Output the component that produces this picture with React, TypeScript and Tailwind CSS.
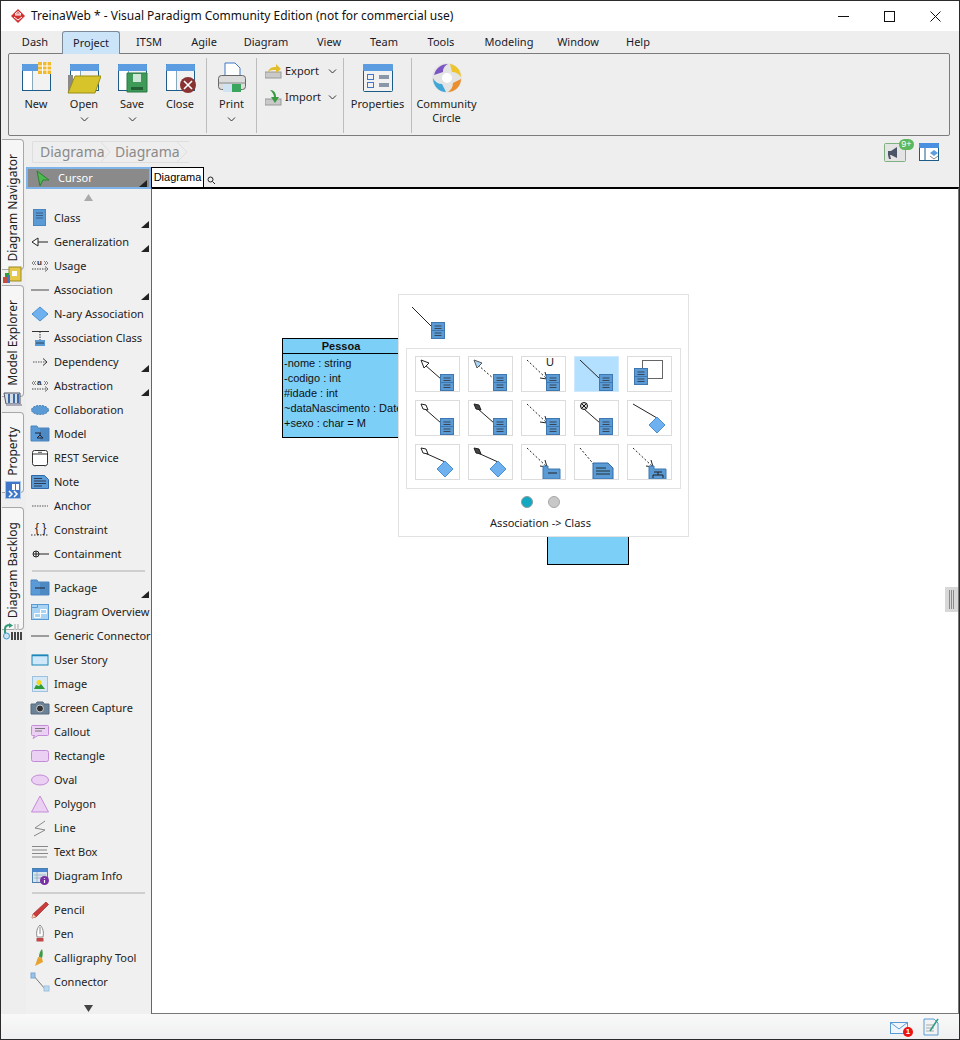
import { type ReactNode } from "react";

const uiFont = "font-['Noto_Sans',sans-serif]";
const arial = "font-['Liberation_Sans',Arial,sans-serif]";

type PaletteItem = { label: string; icon: ReactNode; more?: boolean };

function Svg({ size = 20, box = 20, children }: { size?: number; box?: number; children: ReactNode }) {
  return (
    <svg width={size} height={size} viewBox={`0 0 ${box} ${box}`} fill="none" className="shrink-0">
      {children}
    </svg>
  );
}

function Chevron() {
  return (
    <svg width="9" height="5" viewBox="0 0 9 5" fill="none">
      <path d="M1 0.5 4.5 4 8 0.5" stroke="#333" strokeWidth="1" />
    </svg>
  );
}

function ClassGlyph({ x, y }: { x: number; y: number }) {
  return (
    <g transform={`translate(${x} ${y})`}>
      <rect x="0.5" y="0.5" width="13" height="16" fill="#5b9bd5" stroke="#3f78b0" />
      <path d="M0.5 8.5h13" stroke="#3f78b0" />
      <path d="M3.5 4h7M3.5 6.5h7M3.5 11h7M3.5 13.5h7" stroke="#39475a" />
    </g>
  );
}

function BlueDiamond({ x, y }: { x: number; y: number }) {
  return <path d={`M${x} ${y - 8}l8 8-8 8-8-8z`} fill="#6fb1ee" stroke="#4a8fd0" />;
}

function End({ kind }: { kind: string }) {
  if (kind === "triangle")
    return <path d="M5 3 13 6 8 11z" fill="#fff" stroke="#222" />;
  if (kind === "triangleBlue")
    return <path d="M5 3 13 6 8 11z" fill="#a9d6f5" stroke="#555" />;
  if (kind === "diamond")
    return <path d="M5 3 10 4 12 9 7 8z" fill="#fff" stroke="#222" />;
  if (kind === "diamondDark")
    return <path d="M5 3 10 4 12 9 7 8z" fill="#444" stroke="#222" />;
  if (kind === "cross")
    return (
      <g stroke="#111">
        <circle cx="9" cy="5" r="3.5" fill="#ddd" />
        <path d="M6.5 2.5 11.5 7.5M11.5 2.5 6.5 7.5" />
      </g>
    );
  return null;
}

type CellProps = {
  end?: string;
  dotted?: boolean;
  arrow?: boolean;
  target?: "class" | "diamond" | "package" | "note" | "model" | "none";
  text?: string;
  active?: boolean;
  self?: boolean;
};

function Cell({ end, dotted, arrow, target = "class", text, active, self }: CellProps) {
  const tx = target === "diamond" ? 29 : target === "note" ? 21 : 25;
  const ty = target === "diamond" ? 17 : 22;
  return (
    <div className={`h-[36px] w-[45px] border ${active ? "border-[#cfe8fb] bg-[#b3e0ff]" : "border-[#dcdcdc] bg-white"}`}>
      <svg width="43" height="34" viewBox="0 0 43 34" fill="none">
        {self ? (
          <>
            <rect x="14.5" y="3.5" width="20" height="18" stroke="#666" fill="#fff" />
            <ClassGlyph x={6} y={11} />
          </>
        ) : (
          <>
            <path
              d={`M${end ? 9 : 5} ${end ? 8 : 3}L${tx} ${ty}`}
              stroke="#222"
              strokeDasharray={dotted ? "2 2" : undefined}
            />
            <End kind={end ?? ""} />
            {arrow && <path d={`M${tx - 7} ${ty - 1}l7 1-2-7`} stroke="#222" />}
            {text && (
              <text x="24" y="9" fontSize="11" fontFamily="Liberation Sans" fill="#222">
                {text}
              </text>
            )}
            {target === "class" && <ClassGlyph x={24} y={17} />}
            {target === "diamond" && <BlueDiamond x={29} y={24} />}
            {target === "package" && (
              <g>
                <path d="M21 21h5v3h12v10H21z" fill="#5b9bd5" stroke="#3f78b0" />
                <path d="M26 28h9" stroke="#222" />
              </g>
            )}
            {target === "note" && (
              <g>
                <path d="M18 18h15l5 5v11H18z" fill="#5b9bd5" stroke="#2f68a8" />
                <path d="M21 23h10M21 26h14M21 29h14" stroke="#233" />
              </g>
            )}
            {target === "model" && (
              <g>
                <path d="M21 21h5v3h12v10H21z" fill="#5b9bd5" stroke="#3f78b0" />
                <path d="M26 27h8M30 27v3M25 33v-3h10v3" stroke="#222" />
              </g>
            )}
          </>
        )}
      </svg>
    </div>
  );
}

const classIcon = (
  <Svg>
    <rect x="3.5" y="1.5" width="12" height="16" fill="#5b9bd5" stroke="#4a86c0" />
    <path d="M6 5h7M6 7.5h7M6 10h7" stroke="#3b5f85" />
  </Svg>
);

const folderIcon = (inner: ReactNode) => (
  <Svg>
    <path d="M1 2h6l1 2h11v13H1z" fill="#5a9ad6" stroke="#4a86c0" />
    <path d="M10 4.5h9v12h-9z" fill="#3f78b0" opacity="0.5" />
    {inner}
  </Svg>
);

const purpleFill = "#ecd0f4";
const purpleStroke = "#c48bd8";

const palette1: PaletteItem[] = [
  { label: "Class", icon: classIcon, more: true },
  {
    label: "Generalization",
    more: true,
    icon: (
      <Svg>
        <path d="M8 6 2 10l6 4zM8 10h10" stroke="#222" fill="#fff" />
      </Svg>
    ),
  },
  {
    label: "Usage",
    icon: (
      <Svg>
        <text x="7" y="9" fontSize="8" fontWeight="bold" fontFamily="Liberation Sans" fill="#333">u</text>
        <path d="M4 5 2 7l2 2M6 5 4 7l2 2M14 5l2 2-2 2M16 5l2 2-2 2" stroke="#555" strokeWidth="0.7" />
        <path d="M2 13h15" stroke="#444" strokeDasharray="1.5 1" />
        <path d="M15 10.5 18 13l-3 2.5" stroke="#444" strokeWidth="0.8" />
      </Svg>
    ),
  },
  {
    label: "Association",
    more: true,
    icon: (
      <Svg>
        <path d="M1 10h18" stroke="#777" strokeWidth="1.4" />
      </Svg>
    ),
  },
  {
    label: "N-ary Association",
    icon: (
      <Svg>
        <path d="M10 3l8 7-8 7-8-7z" fill="#6fb1ee" stroke="#4a8fd0" />
      </Svg>
    ),
  },
  {
    label: "Association Class",
    icon: (
      <Svg>
        <path d="M2 3.5h17" stroke="#333" />
        <path d="M10 3.5v9" stroke="#333" strokeDasharray="1.5 1" />
        <rect x="5" y="12" width="10" height="6" fill="#5b9bd5" />
        <path d="M6 15h8" stroke="#345" />
      </Svg>
    ),
  },
  {
    label: "Dependency",
    more: true,
    icon: (
      <Svg>
        <path d="M3 10h13" stroke="#555" strokeDasharray="1.5 1" />
        <path d="M13 6.5 17 10l-4 3.5" stroke="#333" />
      </Svg>
    ),
  },
  {
    label: "Abstraction",
    more: true,
    icon: (
      <Svg>
        <text x="7" y="9" fontSize="8" fontWeight="bold" fontFamily="Liberation Sans" fill="#333">a</text>
        <path d="M4 5 2 7l2 2M6 5 4 7l2 2M14 5l2 2-2 2M16 5l2 2-2 2" stroke="#555" strokeWidth="0.7" />
        <path d="M2 13h15" stroke="#444" strokeDasharray="1.5 1" />
        <path d="M15 10.5 18 13l-3 2.5" stroke="#444" strokeWidth="0.8" />
      </Svg>
    ),
  },
  {
    label: "Collaboration",
    icon: (
      <Svg>
        <ellipse cx="10" cy="10" rx="8.5" ry="4.5" fill="#5b9bd5" stroke="#3f78b0" strokeDasharray="2 1" />
      </Svg>
    ),
  },
  {
    label: "Model",
    icon: folderIcon(<path d="M5 9h6M10 9v2M7 14l3-3 3 3z" stroke="#223" fill="none" />),
  },
  {
    label: "REST Service",
    icon: (
      <Svg>
        <rect x="2.5" y="2.5" width="15" height="15" rx="2" fill="#fff" stroke="#333" />
        <path d="M2.5 6h15" stroke="#333" />
        <path d="M8 4.3h4M5 17.5v1M15 17.5v1" stroke="#555" />
      </Svg>
    ),
  },
  {
    label: "Note",
    icon: (
      <Svg>
        <path d="M1.5 3.5h13l4 4v9h-17z" fill="#5b9bd5" stroke="#2f68a8" />
        <path d="M4 6.5h8M4 9h12M4 11.5h12M4 14h8" stroke="#223" strokeWidth="0.8" />
      </Svg>
    ),
  },
  {
    label: "Anchor",
    icon: (
      <Svg>
        <path d="M2 10h16" stroke="#555" strokeDasharray="1.5 1" />
      </Svg>
    ),
  },
  {
    label: "Constraint",
    icon: (
      <Svg>
        <text x="5" y="12" fontSize="12" fontFamily="Liberation Sans" fill="#222">{"{ }"}</text>
        <path d="M1 15h18" stroke="#333" strokeDasharray="1.5 1.5" />
      </Svg>
    ),
  },
  {
    label: "Containment",
    icon: (
      <Svg>
        <circle cx="6" cy="10" r="3" stroke="#222" />
        <path d="M3 10h6M6 7v6M9 10h10" stroke="#222" />
      </Svg>
    ),
  },
];

const palette2: PaletteItem[] = [
  { label: "Package", more: true, icon: folderIcon(<path d="M5 10h10" stroke="#223" />) },
  {
    label: "Diagram Overview",
    icon: (
      <Svg>
        <rect x="1.5" y="2.5" width="17" height="15" fill="#a9d3f2" stroke="#5b9bd5" />
        <path d="M1.5 5.5h6v-3" stroke="#5b9bd5" />
        <path d="M10.5 7.5h6v4h-6zM4.5 11.5h6v4h-6z" stroke="#fff" />
      </Svg>
    ),
  },
  {
    label: "Generic Connector",
    icon: (
      <Svg>
        <path d="M1 10h18" stroke="#777" strokeWidth="1.4" />
      </Svg>
    ),
  },
  {
    label: "User Story",
    icon: (
      <Svg>
        <rect x="2" y="5" width="16" height="10" fill="#cfe9fa" stroke="#1c86b8" />
        <path d="M2 5.5h16" stroke="#1c86b8" strokeWidth="1.5" />
      </Svg>
    ),
  },
  {
    label: "Image",
    icon: (
      <Svg>
        <rect x="2.5" y="2.5" width="15" height="15" fill="#d6e8f6" stroke="#9cc2e0" />
        <circle cx="9" cy="8.5" r="2.5" fill="#f3d81d" />
        <path d="M4 15l2-4 3 1 2-2 4 5z" fill="#2f9b36" />
      </Svg>
    ),
  },
  {
    label: "Screen Capture",
    icon: (
      <Svg>
        <path d="M1 6h5l1-2h6l1 2h5v10H1z" fill="#6c8297" stroke="#566a7e" />
        <circle cx="10" cy="10.5" r="3.5" fill="#333" stroke="#ccc" />
      </Svg>
    ),
  },
  {
    label: "Callout",
    icon: (
      <Svg>
        <path d="M2.5 3.5h15a1 1 0 0 1 1 1v8a1 1 0 0 1-1 1H8l-5 3 1.5-3h-2a1 1 0 0 1-1-1v-8a1 1 0 0 1 1-1z" fill={purpleFill} stroke={purpleStroke} />
        <path d="M5 6.5h10M5 9h7" stroke="#777" />
      </Svg>
    ),
  },
  {
    label: "Rectangle",
    icon: (
      <Svg>
        <rect x="1.5" y="4.5" width="17" height="11" rx="2" fill={purpleFill} stroke={purpleStroke} />
      </Svg>
    ),
  },
  {
    label: "Oval",
    icon: (
      <Svg>
        <ellipse cx="10" cy="10" rx="8.5" ry="5" fill={purpleFill} stroke={purpleStroke} />
      </Svg>
    ),
  },
  {
    label: "Polygon",
    icon: (
      <Svg>
        <path d="M10 2 18.5 18h-17z" fill={purpleFill} stroke={purpleStroke} />
      </Svg>
    ),
  },
  {
    label: "Line",
    icon: (
      <Svg>
        <path d="M15 3 5 10l10 2-11 6" stroke="#888" />
      </Svg>
    ),
  },
  {
    label: "Text Box",
    icon: (
      <Svg>
        <path d="M2 4.5h16M2 8h15M2 11.5h16M2 15h15" stroke="#888" />
      </Svg>
    ),
  },
  {
    label: "Diagram Info",
    icon: (
      <Svg>
        <rect x="2.5" y="2.5" width="15" height="14" fill="#d8e4ee" stroke="#4a7fae" />
        <path d="M2.5 4.5h15" stroke="#4a86d0" strokeWidth="3" />
        <path d="M7 6v10M4 9h12M4 12h12" stroke="#9fb4c6" />
        <circle cx="14.5" cy="14.5" r="4.5" fill="#7b2fa5" />
        <path d="M14.5 12v.8M14.5 14v3" stroke="#fff" strokeWidth="1.2" />
      </Svg>
    ),
  },
];

const palette3: PaletteItem[] = [
  {
    label: "Pencil",
    icon: (
      <Svg>
        <path d="M16 2l2.5 2.5L6 17l-4 1 1-4z" fill="#cc3b3b" stroke="#9c2b2b" strokeWidth="0.7" />
        <path d="M3 14l3 3-4 1z" fill="#ecd4b0" />
      </Svg>
    ),
  },
  {
    label: "Pen",
    icon: (
      <Svg>
        <path d="M10 1c-3 3-4 7-3 12h6c1-5 0-9-3-12zM10 3v7" stroke="#888" fill="#fff" />
        <rect x="6.5" y="14" width="7" height="3.5" fill="#c24848" />
      </Svg>
    ),
  },
  {
    label: "Calligraphy Tool",
    icon: (
      <Svg>
        <path d="M12 1c1 3 1 6 0 9l-3-1c0-3 1-6 3-8z" fill="#3f9a46" />
        <path d="M8 9l4 1 1 4-8 4c1-3 2-6 3-9z" fill="#e7a331" />
      </Svg>
    ),
  },
  {
    label: "Connector",
    icon: (
      <Svg>
        <path d="M3 3l12 14" stroke="#777" />
        <rect x="1" y="1" width="4" height="5" fill="#9cc2e8" stroke="#7aa5d0" />
        <rect x="14" y="14" width="5" height="5" fill="#bcd7ee" stroke="#9cc2e0" />
      </Svg>
    ),
  },
];

function PaletteRow({ item }: { item: PaletteItem }) {
  return (
    <div className="relative flex h-[24px] items-center gap-[4px] pl-[4px]">
      {item.icon}
      <span className="text-[11px] whitespace-nowrap text-[#222]">{item.label}</span>
      {item.more && <MoreMark className="bottom-[2px]" />}
    </div>
  );
}

function MoreMark({ className }: { className: string }) {
  return <span className={`absolute right-[2px] h-[7px] w-[8px] bg-[#222] [clip-path:polygon(100%_0,100%_100%,0_100%)] ${className}`} />;
}

function Separator() {
  return (
    <div className="flex h-[10px] items-center pr-[6px] pl-[6px]">
      <div className="h-[2px] w-full bg-[#cfcfcf]" />
    </div>
  );
}

function RibbonButton({ width, icon, label, menu }: { width: string; icon: ReactNode; label: ReactNode; menu?: boolean }) {
  return (
    <div className={`flex shrink-0 flex-col items-center pt-[7px] ${width}`}>
      <div className="flex h-[34px] items-center">{icon}</div>
      <span className="mt-[2px] text-center text-[11px] leading-[14px] text-[#222]">{label}</span>
      {menu && (
        <span className="mt-[6px] flex">
          <Chevron />
        </span>
      )}
    </div>
  );
}

function RibbonDivider() {
  return <div className="mt-[4px] h-[75px] w-[1px] shrink-0 bg-[#bdbdbd]" />;
}

function WindowIcon({ children }: { children: ReactNode }) {
  return (
    <svg width="34" height="32" viewBox="0 0 34 32" fill="none">
      <rect x="3.5" y="2.5" width="28" height="26" fill="#f2f2f2" stroke="#1d5c86" />
      <rect x="3" y="2" width="29" height="7" rx="1" fill="#5b9de0" />
      <path d="M13 9v19" stroke="#1d5c86" />
      <rect x="4" y="9" width="9" height="19" fill="#fff" />
      {children}
    </svg>
  );
}

function SideTab({ label, height, margin, icon }: { label: string; height: string; margin: string; icon: ReactNode }) {
  return (
    <div className={`flex w-[22px] flex-col items-center rounded-r-[4px] border border-l-0 border-[#a8a8a8] bg-[#f6f6f6] pt-[14px] ${height} ${margin}`}>
      <span className="rotate-180 text-[12px] leading-[16px] whitespace-nowrap text-[#222] [writing-mode:vertical-rl]">{label}</span>
      <div className="mt-[5px]">{icon}</div>
    </div>
  );
}

const tabs = [
  { label: "Dash", width: "w-[54px]" },
  { label: "Project", width: "w-[58px]", active: true },
  { label: "ITSM", width: "w-[58px]" },
  { label: "Agile", width: "w-[52px]" },
  { label: "Diagram", width: "w-[72px]" },
  { label: "View", width: "w-[54px]" },
  { label: "Team", width: "w-[56px]" },
  { label: "Tools", width: "w-[58px]" },
  { label: "Modeling", width: "w-[78px]" },
  { label: "Window", width: "w-[60px]" },
  { label: "Help", width: "w-[60px]" },
];

const attributes = ["-nome : string", "-codigo : int", "#idade : int", "~dataNascimento : Date", "+sexo : char = M"];

export default function App() {
  return (
    <div className={`${uiFont} flex h-[1040px] w-[960px] flex-col overflow-hidden border border-[#2b2b2b] bg-[#eeeeee]`}>
      {/* title bar */}
      <div className="flex h-[30px] shrink-0 items-center bg-white pr-[18px] pl-[9px]">
        <svg width="16" height="16" viewBox="0 0 16 16" className="shrink-0">
          <path d="M8 1l7 7-7 7-7-7z" fill="#d2312f" />
          <path d="M5 7h6M4 9l4 3 4-3M8 3.5 11 6H5z" stroke="#fff" strokeWidth="1" fill="none" />
        </svg>
        <span className="ml-[5px] text-[12px] text-[#111]">TreinaWeb * - Visual Paradigm Community Edition (not for commercial use)</span>
        <div className="ml-auto flex items-center gap-[35px]">
          <svg width="11" height="11" viewBox="0 0 11 11"><path d="M0 5.5h11" stroke="#111" /></svg>
          <svg width="11" height="11" viewBox="0 0 11 11" fill="none"><rect x="0.5" y="0.5" width="10" height="10" stroke="#111" /></svg>
          <svg width="11" height="11" viewBox="0 0 11 11"><path d="M0.5 0.5l10 10M10.5 0.5l-10 10" stroke="#111" /></svg>
        </div>
      </div>

      {/* ribbon tabs */}
      <div className="flex h-[22px] shrink-0 pl-[7px]">
        {tabs.map((tab) => (
          <div
            key={tab.label}
            className={`flex items-center justify-center text-[11px] text-[#1a1a2a] ${tab.width} ${tab.active ? "relative z-10 -mb-[1px] rounded-t-[3px] border border-b-0 border-[#7a8a99] bg-[#cce4f7]" : ""}`}
          >
            {tab.label}
          </div>
        ))}
      </div>

      {/* ribbon */}
      <div className="mr-[9px] ml-[7px] flex h-[83px] shrink-0 rounded-[2px] border border-[#7c7c7c] pl-[3px]">
        <RibbonButton
          width="w-[48px]"
          label="New"
          icon={
            <WindowIcon>
              <rect x="19" y="0" width="13" height="12" fill="#f1b92c" />
              <path d="M23.500 0v12M28 0v12M19 4h13M19 8h13" stroke="#fff" />
            </WindowIcon>
          }
        />
        <RibbonButton
          width="w-[48px]"
          menu
          label="Open"
          icon={
            <WindowIcon>
              <path d="M1 13h5v18H1z" fill="#8a8a8a" />
              <path d="M8 14h26l-6 17H1z" fill="#d6c42a" stroke="#9b8d16" />
            </WindowIcon>
          }
        />
        <RibbonButton
          width="w-[48px]"
          menu
          label="Save"
          icon={
            <WindowIcon>
              <path d="M12 11h20v19H12z" fill="#3f9a5a" stroke="#2b7a42" />
              <rect x="18" y="12" width="8" height="8" fill="#cfe7d6" />
              <rect x="16" y="25" width="12" height="3" fill="#235f34" />
            </WindowIcon>
          }
        />
        <RibbonButton
          width="w-[48px]"
          label="Close"
          icon={
            <WindowIcon>
              <circle cx="25" cy="23" r="8" fill="#8a3232" />
              <path d="M21 19l8 8M29 19l-8 8" stroke="#fff" strokeWidth="1.6" />
            </WindowIcon>
          }
        />
        <div className="w-[2px] shrink-0" />
        <RibbonDivider />
        <RibbonButton
          width="w-[49px]"
          menu
          label="Print"
          icon={
            <svg width="30" height="32" viewBox="0 0 30 32" fill="none">
              <path d="M8 1h10l5 5v9H8z" fill="#fff" stroke="#3f78c8" />
              <rect x="1.500" y="13.500" width="27" height="14" rx="3" fill="#dcdcdc" stroke="#666" />
              <rect x="6" y="22" width="18" height="8" fill="#3ba55d" />
              <rect x="6" y="22" width="9" height="8" fill="#cfe3f3" />
              <path d="M1.500 21h27" stroke="#888" />
            </svg>
          }
        />
        <RibbonDivider />
        <div className="flex w-[86px] shrink-0 flex-col pt-[4px] pl-[8px]">
          <div className="flex h-[26px] items-center gap-[3px] text-[11px] text-[#222]">
            <svg width="17" height="17" viewBox="0 0 17 17" className="shrink-0">
              <rect x="0" y="9" width="16" height="6" fill="#c9c9c9" stroke="#999" />
              <path d="M3 9c1-4 4-5 8-5V1l5 5-5 4V7c-3 0-6 0-8 2z" fill="#e3bd2b" />
            </svg>
            <span className="w-[40px]">Export</span>
            <Chevron />
          </div>
          <div className="flex h-[26px] items-center gap-[3px] text-[11px] text-[#222]">
            <svg width="17" height="17" viewBox="0 0 17 17" className="shrink-0">
              <rect x="0" y="10" width="16" height="6" fill="#c9c9c9" stroke="#999" />
              <path d="M5 1c4 0 6 3 6 7h3l-4 6-4-6h3c0-3-2-5-4-7z" fill="#3b9a3f" />
            </svg>
            <span className="w-[40px]">Import</span>
            <Chevron />
          </div>
        </div>
        <RibbonDivider />
        <RibbonButton
          width="w-[67px]"
          label="Properties"
          icon={
            <svg width="32" height="30" viewBox="0 0 32 30" fill="none">
              <rect x="1.500" y="1.500" width="29" height="27" rx="1" fill="#f1f1f1" stroke="#1d5c86" />
              <rect x="1" y="1" width="30" height="7" rx="1" fill="#5b9de0" />
              <rect x="5.500" y="11.500" width="6" height="5" stroke="#3f78c8" />
              <rect x="5.500" y="19.500" width="6" height="5" stroke="#3f78c8" />
              <rect x="17" y="12" width="10" height="4" fill="#8a97a8" />
              <rect x="17" y="20" width="10" height="4" fill="#8a97a8" />
            </svg>
          }
        />
        <RibbonDivider />
        <RibbonButton
          width="w-[69px]"
          label={
            <>
              Community
              <br />
              Circle
            </>
          }
          icon={
            <svg width="32" height="32" viewBox="0 0 32 32" fill="none">
              <circle cx="16" cy="16" r="15" fill="#e4e4e4" />
              <circle cx="16" cy="16" r="5" fill="#fff" />
              <path d="M3 13C5 6 10 2 17 2c-4 2-5 5-5 8z" fill="#7b55c4" />
              <path d="M19 2c6 1 11 6 11 13-2-3-5-5-9-5z" fill="#eec42b" />
              <path d="M30 17c0 7-6 13-13 13 3-2 5-5 5-9z" fill="#ea8f2b" />
              <path d="M15 30C8 30 2 24 2 16c2 4 5 6 9 6z" fill="#3fa6d8" />
            </svg>
          }
        />
      </div>

      {/* body */}
      <div className="flex min-h-0 flex-1">
        <div className="flex w-[25px] shrink-0 flex-col pl-[1px]">
          <SideTab
            label="Diagram Navigator"
            height="h-[131px]"
            margin="mt-[3px]"
            icon={
              <svg width="19" height="18" viewBox="0 0 19 18">
                <rect x="6" y="1" width="12" height="14" fill="#e6c84a" stroke="#9b8a20" />
                <rect x="9" y="5" width="5" height="5" fill="#fff" />
                <rect x="2" y="7" width="4" height="9" fill="#2f9b36" />
                <rect x="0" y="11" width="5" height="6" fill="#c84b3b" />
                <rect x="4" y="9" width="3" height="8" fill="#3f78c8" />
              </svg>
            }
          />
          <SideTab
            label="Model Explorer"
            height="h-[112px]"
            margin="mt-[15px]"
            icon={
              <svg width="19" height="16" viewBox="0 0 19 16" fill="none">
                <path d="M1 2h16v11H3z" fill="#d3dde6" stroke="#556" />
                <path d="M6 3v9M11 3v9M15 3v9" stroke="#3f68a8" strokeWidth="2" />
                <path d="M3 13h16v2H3z" fill="#aab" />
              </svg>
            }
          />
          <SideTab
            label="Property"
            height="h-[81px]"
            margin="mt-[15px]"
            icon={
              <svg width="16" height="18" viewBox="0 0 16 18" fill="none">
                <rect x="0.500" y="0.500" width="15" height="17" fill="#3f78c8" stroke="#a9c4e6" />
                <rect x="7" y="3" width="3" height="6" fill="#fff" />
                <rect x="11" y="3" width="3" height="6" fill="#fff" />
                <path d="M4 10l3 3-3 3M9 10l3 3-3 3" stroke="#fff" strokeWidth="1.5" />
              </svg>
            }
          />
          <SideTab
            label="Diagram Backlog"
            height="h-[123px]"
            margin="mt-[14px]"
            icon={
              <svg width="19" height="17" viewBox="0 0 19 17" fill="none">
                <path d="M2 10V6c0-3 2-4 5-4" stroke="#2f9b76" strokeWidth="2" />
                <path d="M6 0l4 2.500L6 5z" fill="#2f9b76" />
                <circle cx="3.500" cy="13" r="3" fill="#cfe3f3" stroke="#3f9ac8" />
                <path d="M9 9v8M12 9v8M15 9v8M18 9v8" stroke="#444" strokeWidth="2" />
                <path d="M12 1v6M15 1v6" stroke="#ccc" strokeWidth="2" />
              </svg>
            }
          />
        </div>

        <div className="flex min-w-0 flex-1 flex-col">
          {/* breadcrumb */}
          <div className="flex h-[31px] shrink-0 items-center pr-[20px] pl-[6px]">
            <div className="flex h-[22px] items-center rounded-l-[2px] border-y border-l border-[#dedede] pl-[7px] text-[14px] text-[#8a8a8a]">
              <span className="w-[59px]">Diagrama</span>
              <svg width="28" height="22" viewBox="0 0 28 22" fill="none" className="-my-[1px]">
                <path d="M1 0l10 11L1 22" stroke="#dedede" />
              </svg>
              <span className="-ml-[12px] w-[60px]">Diagrama</span>
              <svg width="14" height="22" viewBox="0 0 14 22" fill="none" className="-my-[1px]">
                <path d="M1 0l11 11L1 22" stroke="#dedede" />
              </svg>
            </div>
            <div className="relative ml-auto flex items-center gap-[13px]">
              <div className="relative">
                <svg width="22" height="20" viewBox="0 0 22 20" fill="none" className="mt-[3px]">
                  <rect x="0.500" y="0.500" width="21" height="18" rx="1" fill="#e4e4e4" stroke="#7fb07f" />
                  <path d="M4 8h3l6-4v11l-6-3H6l1 4H5l-1-4z" fill="#4a5568" />
                </svg>
                <span className={`${arial} absolute -top-[1px] -right-[8px] flex h-[11px] w-[15px] items-center justify-center rounded-full bg-[#5cb85c] text-[9px] leading-none text-white`}>9+</span>
              </div>
              <svg width="20" height="18" viewBox="0 0 20 18" fill="none">
                <rect x="0.500" y="0.500" width="19" height="17" fill="#fff" stroke="#1d5c86" />
                <rect x="0" y="0" width="20" height="5" rx="1" fill="#4a8fe0" />
                <path d="M6 5v12" stroke="#1d5c86" />
                <path d="M15 7l4 3-4 3-4-3z" fill="#5b9de0" />
                <path d="M11 13l4 3 4-3" stroke="#888" />
              </svg>
            </div>
          </div>

          <div className="flex min-h-0 flex-1">
            {/* palette */}
            <div className="flex w-[125px] shrink-0 flex-col overflow-hidden bg-[#f0f0f0]">
              <div className="relative flex h-[22px] shrink-0 items-center gap-[5px] border-2 border-[#7eb4ea] bg-[#8a8a8a] pl-[8px] text-[11px] text-white">
                <svg width="14" height="17" viewBox="0 0 14 17" className="shrink-0">
                  <path d="M1 1l12 9-6 0-3 6z" fill="#4cb84f" stroke="#2f7f32" />
                </svg>
                <span className="ml-[3px]">Cursor</span>
                <MoreMark className="bottom-0" />
              </div>
              <div className="flex h-[17px] shrink-0 items-center justify-center">
                <span className="h-[7px] w-[9px] bg-[#aaaaaa] [clip-path:polygon(50%_0,100%_100%,0_100%)]" />
              </div>
              {palette1.map((item) => (
                <PaletteRow key={item.label} item={item} />
              ))}
              <Separator />
              {palette2.map((item) => (
                <PaletteRow key={item.label} item={item} />
              ))}
              <Separator />
              {palette3.map((item) => (
                <PaletteRow key={item.label} item={item} />
              ))}
              <div className="flex flex-1 items-end justify-center pb-[2px]">
                <span className="h-[7px] w-[9px] bg-[#444444] [clip-path:polygon(0_0,100%_0,50%_100%)]" />
              </div>
            </div>

            {/* editor */}
            <div className="flex min-w-0 flex-1 flex-col">
              <div className="flex h-[20px] shrink-0 items-start">
                <div className={`${arial} flex h-[20px] w-[53px] items-center justify-center border border-b-0 border-black bg-white text-[11px] text-black`}>Diagrama</div>
                <svg width="9" height="9" viewBox="0 0 9 9" fill="none" className="mt-[9px] ml-[3px]">
                  <circle cx="3.500" cy="3.500" r="2.500" stroke="#222" />
                  <path d="M5.500 5.500 8 8" stroke="#222" />
                </svg>
              </div>
              <div className={`${arial} relative min-h-0 flex-1 border-t-2 border-r border-b border-l border-t-black border-r-[#777] border-b-[#777] border-l-[#666] bg-white`}>
                {/* Pessoa class */}
                <div className="absolute top-[149px] left-[130px] h-[100px] w-[140px] border border-black bg-[#7ccff6] text-[11px] leading-[15px] text-[#111]">
                  <div className="h-[15px] border-b border-black pr-[22px] text-center font-bold">Pessoa</div>
                  <div className="pt-[2px] pl-[1px] whitespace-nowrap">
                    {attributes.map((attr) => (
                      <div key={attr}>{attr}</div>
                    ))}
                  </div>
                </div>
                {/* second class, mostly hidden by the popup */}
                <div className="absolute top-[335px] left-[395px] h-[41px] w-[82px] border border-black bg-[#7ccff6]">
                  <div className="mt-[11px] h-px bg-black" />
                </div>
                {/* connector picker */}
                <div className="absolute top-[105px] left-[246px] flex h-[243px] w-[291px] flex-col border border-[#e2e2e2] bg-white px-[7px]">
                  <svg width="40" height="46" viewBox="0 0 40 46" fill="none" className="mt-[7px] ml-[5px] shrink-0">
                    <path d="M1 5l20 20" stroke="#222" />
                    <ClassGlyph x={20} y={20} />
                  </svg>
                  <div className="flex h-[141px] shrink-0 flex-col gap-[8px] border border-[#e2e2e2] px-[8px] pt-[7px]">
                    <div className="flex gap-[8px]">
                      <Cell end="triangle" />
                      <Cell end="triangleBlue" dotted />
                      <Cell dotted arrow text="U" />
                      <Cell active />
                      <Cell self />
                    </div>
                    <div className="flex gap-[8px]">
                      <Cell end="diamond" />
                      <Cell end="diamondDark" />
                      <Cell dotted arrow />
                      <Cell end="cross" />
                      <Cell target="diamond" />
                    </div>
                    <div className="flex gap-[8px]">
                      <Cell end="diamond" target="diamond" />
                      <Cell end="diamondDark" target="diamond" />
                      <Cell dotted arrow target="package" />
                      <Cell dotted target="note" />
                      <Cell dotted arrow target="model" />
                    </div>
                  </div>
                  <div className="mt-[7px] flex justify-center gap-[15px] pr-[6px]">
                    <span className="h-[12px] w-[12px] rounded-full border border-[#8a9aa0] bg-[#12a8c2]" />
                    <span className="h-[12px] w-[12px] rounded-full border border-[#a8a8a8] bg-[#c8c8c8]" />
                  </div>
                  <div className={`${uiFont} mt-[7px] pr-[6px] text-center text-[11px] text-[#1a1a2a]`}>Association -&gt; Class</div>
                </div>
                {/* splitter grip */}
                <div className="absolute top-[398px] right-0 flex h-[25px] w-[13px] items-center justify-center gap-[1px] bg-[#d8d8d8]">
                  <span className="h-[19px] w-[1px] bg-[#8a8a8a]" />
                  <span className="h-[19px] w-[1px] bg-[#8a8a8a]" />
                  <span className="h-[19px] w-[1px] bg-[#8a8a8a]" />
                </div>
              </div>
            </div>
          </div>
        </div>
      </div>

      {/* status bar */}
      <div className="flex h-[25px] shrink-0 items-center justify-end gap-[14px] bg-gradient-to-b from-[#f9f9f9] to-[#eff0f1] pr-[19px]">
        <div className="relative mt-[3px]">
          <svg width="18" height="12" viewBox="0 0 18 12" fill="none">
            <rect x="0.500" y="0.500" width="17" height="11" fill="#f0f6fb" stroke="#5b9bd5" />
            <path d="M0.500 0.500 9 7l8.500-6.500" stroke="#5b9bd5" />
          </svg>
          <span className={`${arial} absolute -right-[5px] -bottom-[3px] flex h-[10px] w-[10px] items-center justify-center rounded-full bg-[#ee1111] text-[8px] leading-none font-bold text-white`}>1</span>
        </div>
        <svg width="17" height="18" viewBox="0 0 17 18" fill="none" className="ml-[1px]">
          <path d="M1 1h10l4 4v12H1z" fill="#f2f2f2" stroke="#5b9bd5" />
          <path d="M3 7h8M3 10h8M3 13h8" stroke="#aaa" />
          <path d="M15 1 7 13" stroke="#2a9d8f" strokeWidth="1.5" />
        </svg>
      </div>
    </div>
  );
}
